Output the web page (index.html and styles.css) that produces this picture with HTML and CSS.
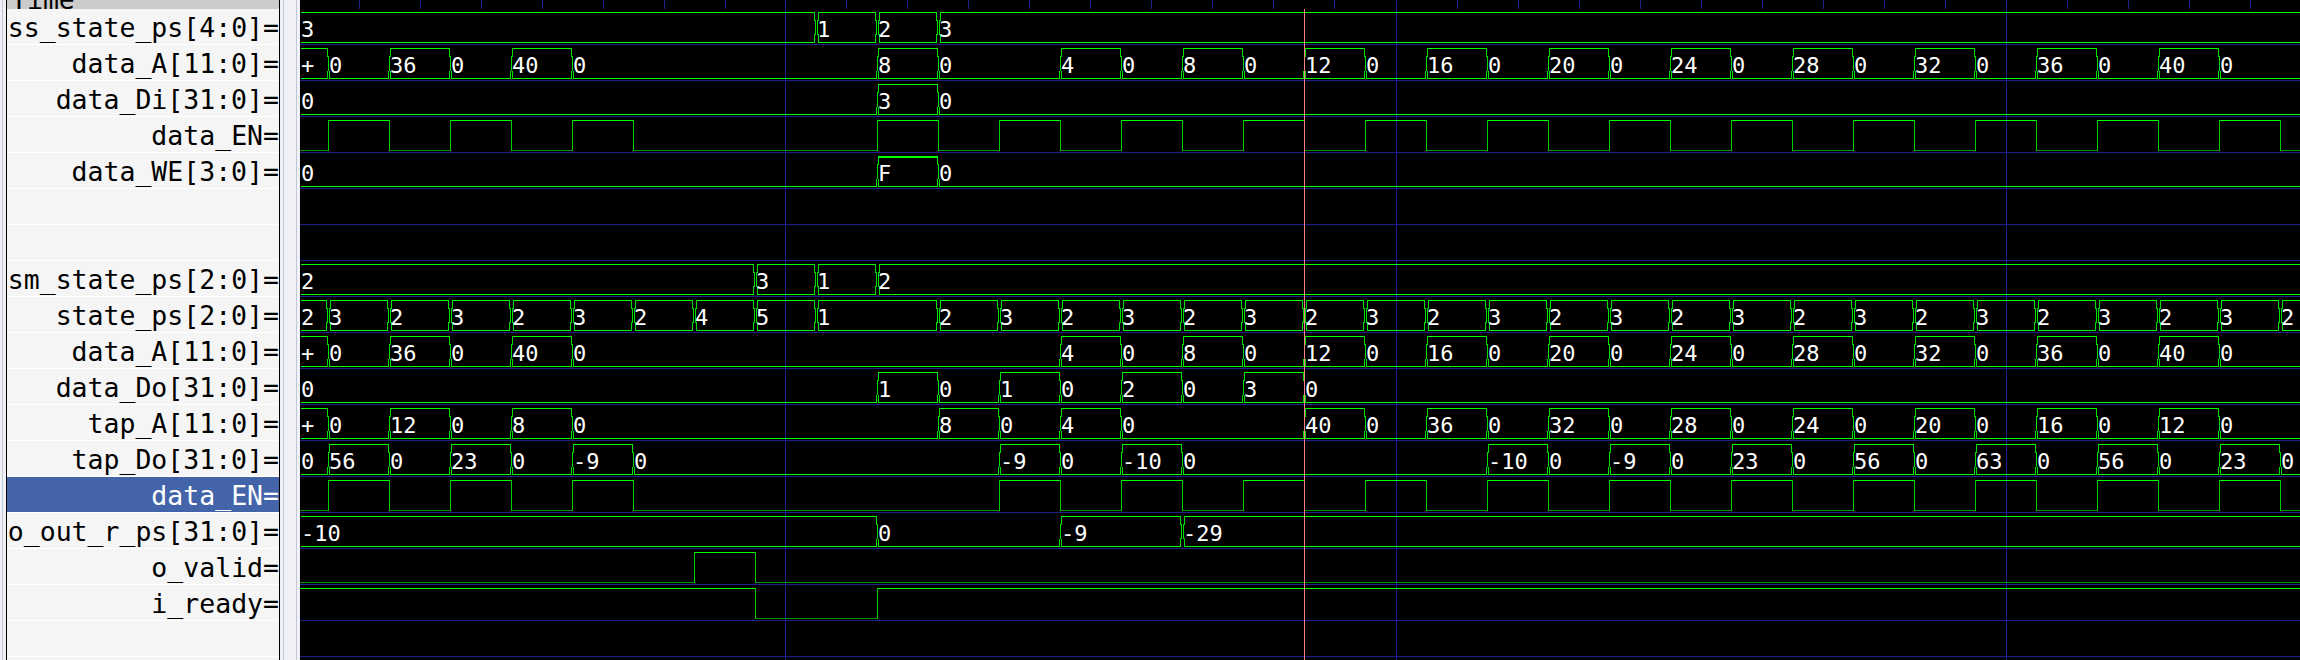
FILE: index.html
```html
<!DOCTYPE html>
<html lang="en">
<head>
  <meta charset="UTF-8">
  <title>GTKWave</title>
  <link rel="stylesheet" href="styles.css">
</head>
<body>
  <div class="window">
    <div class="edge"></div>
    <div class="signals">
      <div class="time-head"><span>Time</span></div>
      <div class="signal">ss_state_ps[4:0]=</div>
      <div class="signal">data_A[11:0]=</div>
      <div class="signal">data_Di[31:0]=</div>
      <div class="signal">data_EN=</div>
      <div class="signal">data_WE[3:0]=</div>
      <div class="signal"></div>
      <div class="signal"></div>
      <div class="signal">sm_state_ps[2:0]=</div>
      <div class="signal">state_ps[2:0]=</div>
      <div class="signal">data_A[11:0]=</div>
      <div class="signal">data_Do[31:0]=</div>
      <div class="signal">tap_A[11:0]=</div>
      <div class="signal">tap_Do[31:0]=</div>
      <div class="signal selected">data_EN=</div>
      <div class="signal">o_out_r_ps[31:0]=</div>
      <div class="signal">o_valid=</div>
      <div class="signal">i_ready=</div>
      <div class="signal"></div>
      <div class="signal"></div>
    </div>
    <div class="sash"></div>
    <svg class="wave" id="wave" viewBox="300 0 2000 660" width="2000" height="660"></svg>
  </div>
  <script src="wave.js"></script>
</body>
</html>
```
FILE: styles.css
```css
* {
  box-sizing: border-box;
}
html,
body {
  margin: 0;
  padding: 0;
  overflow: hidden;
}
body {
  background-color: #f0f1f6;
  font-family: "DejaVu Sans Mono", "Liberation Mono", monospace;
}
.window {
  display: flex;
  width: 2300px;
  height: 660px;
  overflow: hidden;
}
.edge {
  width: 4px;
  margin-left: 2px;
  border-left: 1px solid #c3c6d3;
}
.signals {
  width: 274px;
  height: 660px;
  flex: none;
  overflow: hidden;
  background-color: #f5f5f5;
  border-left: 1px solid #000;
  border-right: 1px solid #000;
  font-size: 26.5px;
  color: #000;
}
.time-head {
  height: 9px;
  padding-left: 4px;
  overflow: hidden;
  background-color: #cbcbcb;
  display: flex;
  align-items: flex-end;
}
.time-head span {
  line-height: 32px;
  margin-bottom: -7px;
  flex: none;
}
.signal {
  height: 36px;
  padding-top: 2px;
  display: flex;
  align-items: center;
  justify-content: flex-end;
  white-space: pre;
  border-bottom: 1px solid #fff;
}
.selected {
  background-color: #4464a9;
  color: #fff;
}
.sash {
  width: 14px;
  flex: none;
  margin: 0 3px;
  border-left: 1px solid #c3c6d3;
  border-right: 1px solid #c3c6d3;
}
.wave {
  display: block;
  flex: none;
  background-color: #000;
  shape-rendering: crispEdges;
}
.grid {
  stroke: #20208c;
  fill: none;
}
.cursor {
  stroke: #ff8080;
  fill: none;
}
.vec {
  stroke: #00ff00;
  stroke-width: 1.2;
  shape-rendering: auto;
  fill: none;
}
.vec-edge {
  stroke: #00e000;
  fill: none;
}
.bit-high {
  stroke: #00ff00;
  stroke-width: 1.15;
  shape-rendering: auto;
  fill: none;
}
.bit-low {
  stroke: #009400;
  fill: none;
}
.bit-edge {
  stroke: #00d000;
  fill: none;
}
.val {
  fill: #fff;
  font-size: 22px;
  font-family: "DejaVu Sans Mono", "Liberation Mono", monospace;
  shape-rendering: auto;
}
```
FILE: wave.js
```js
const svg = document.getElementById("wave");
const NS = "http://www.w3.org/2000/svg";
const LEFT = 301;
const RIGHT = 2300;

function edge(k) {
  return 328 + 61 * k;
}

function addPath(cls, d) {
  const p = document.createElementNS(NS, "path");
  p.setAttribute("class", cls);
  p.setAttribute("d", d);
  svg.appendChild(p);
}

function hline(x1, x2, y) {
  return `M${x1} ${y + 0.5}H${x2 + 1}`;
}

function vline(x, y1, y2) {
  return `M${x + 0.5} ${y1}V${y2 + 1}`;
}

// pairs from k to k + 1, value alternating with "0"
function pulses(first, values) {
  const out = [];
  values.forEach((v, i) => {
    out.push([first + i * 2, v], [first + i * 2 + 1, "0"]);
  });
  return out;
}

const addrPulses = pulses(12, ["4", "8", "12", "16", "20", "24", "28", "32", "36", "40"]);

function stateSeq() {
  const out = [];
  for (let k = 10; k <= 32; k++) out.push([k, k % 2 ? "3" : "2"]);
  return out;
}

// row index -> [start value, [k, value]...]
const vectors = {
  0: ["3", [[8, "1"], [9, "2"], [10, "3"]]],
  1: ["+", [[0, "0"], [1, "36"], [2, "0"], [3, "40"], [4, "0"], [9, "8"], [10, "0"], ...addrPulses]],
  2: ["0", [[9, "3"], [10, "0"]]],
  4: ["0", [[9, "F"], [10, "0"]]],
  7: ["2", [[7, "3"], [8, "1"], [9, "2"]]],
  8: ["2", [[0, "3"], [1, "2"], [2, "3"], [3, "2"], [4, "3"], [5, "2"], [6, "4"], [7, "5"], [8, "1"], ...stateSeq()]],
  9: ["+", [[0, "0"], [1, "36"], [2, "0"], [3, "40"], [4, "0"], ...addrPulses]],
  10: ["0", [[9, "1"], [10, "0"], [11, "1"], [12, "0"], [13, "2"], [14, "0"], [15, "3"], [16, "0"]]],
  11: ["+", [[0, "0"], [1, "12"], [2, "0"], [3, "8"], [4, "0"], [10, "8"], [11, "0"], [12, "4"], [13, "0"],
    ...pulses(16, ["40", "36", "32", "28", "24", "20", "16", "12"])]],
  12: ["0", [[0, "56"], [1, "0"], [2, "23"], [3, "0"], [4, "-9"], [5, "0"], [11, "-9"], [12, "0"], [13, "-10"], [14, "0"],
    ...pulses(19, ["-10", "-9", "23", "56", "63", "56", "23"])]],
  14: ["-10", [[9, "0"], [12, "-9"], [14, "-29"]]]
};

// row index -> [start level, edge numbers]
function enEdges(list) {
  for (let k = 11; k <= 32; k++) list.push(k);
  return list;
}
const bits = {
  3: [0, enEdges([0, 1, 2, 3, 4, 5, 9, 10])],
  13: [0, enEdges([0, 1, 2, 3, 4, 5])],
  15: [0, [6, 7]],
  16: [1, [7, 9]]
};

// grid under the traces
let grid = "";
for (let r = 0; r < 18; r++) grid += hline(300, RIGHT, 44 + 36 * r);
const majors = [785, 1396, 2006];
majors.forEach((m) => {
  grid += vline(m, 0, 660);
  for (let i = 1; i < 10; i++) grid += vline(m + 61 * i, 0, 8);
});
for (let i = 1; i < 8; i++) grid += vline(786 - 61 * i, 0, 8);
addPath("grid", grid);

let vecLines = "";
let vecEdges = "";

function drawTransition(c, top, bot, prev, next) {
  const both = prev !== "0" && next !== "0";
  if (both) {
    vecEdges += vline(c - 2, top, top + 8) + vline(c + 2, top, top + 8);
    vecEdges += vline(c - 1, top + 8, bot - 8) + vline(c + 1, top + 8, bot - 8);
    vecEdges += vline(c - 2, bot - 8, bot) + vline(c + 2, bot - 8, bot);
  } else {
    vecEdges += vline(c, top + 8, bot - 8);
    vecEdges += vline(c - 1, bot - 7, bot) + vline(c + 1, bot - 7, bot);
    if (prev !== "0") vecEdges += vline(c - 1, top, top + 8);
    if (next !== "0") vecEdges += vline(c + 1, top, top + 8);
  }
}

function addValue(x, y, text) {
  const t = document.createElementNS(NS, "text");
  t.setAttribute("class", "val");
  t.setAttribute("x", x);
  t.setAttribute("y", y);
  t.textContent = text;
  svg.appendChild(t);
}

const labels = [];
Object.keys(vectors).forEach((key) => {
  const r = Number(key);
  const top = 12 + 36 * r;
  const bot = 42 + 36 * r;
  const [start, changes] = vectors[key];
  const segs = [[null, start], ...changes];
  segs.forEach((seg, i) => {
    const value = seg[1];
    const prev = i > 0 ? segs[i - 1][1] : null;
    const next = i < segs.length - 1 ? segs[i + 1][1] : null;
    const c = i > 0 ? edge(seg[0]) : null;
    const nextC = next !== null ? edge(segs[i + 1][0]) : null;
    let from = LEFT;
    if (i > 0) from = c + (prev !== "0" && value !== "0" ? 2 : 1);
    let to = RIGHT;
    if (next !== null) to = nextC - (next !== "0" && value !== "0" ? 2 : 1);
    vecLines += hline(from, to, bot);
    if (value !== "0") {
      vecLines += hline(from, to, top);
      if (value === "F") vecLines += hline(from, to, top + 1);
    }
    if (next !== null) drawTransition(nextC, top, bot, value, next);
    labels.push([i > 0 ? c + 1 : 301, top + 25, value]);
  });
});
addPath("vec-edge", vecEdges);
addPath("vec", vecLines);

let high = "";
let low = "";
let edges = "";
Object.keys(bits).forEach((key) => {
  const r = Number(key);
  const top = 12 + 36 * r;
  const bot = 42 + 36 * r;
  let level = bits[key][0];
  let from = 300;
  bits[key][1].forEach((k) => {
    const x = edge(k);
    if (level) high += hline(from, x, top);
    else low += hline(from, x, bot);
    edges += vline(x, top, bot);
    level = level ? 0 : 1;
    from = x;
  });
  if (level) high += hline(from, RIGHT, top);
  else low += hline(from, RIGHT, bot);
});
addPath("bit-low", low);
addPath("bit-high", high);
addPath("bit-edge", edges);

addPath("cursor", vline(1304, 9, 660));

labels.forEach((l) => addValue(l[0], l[1], l[2]));
```
